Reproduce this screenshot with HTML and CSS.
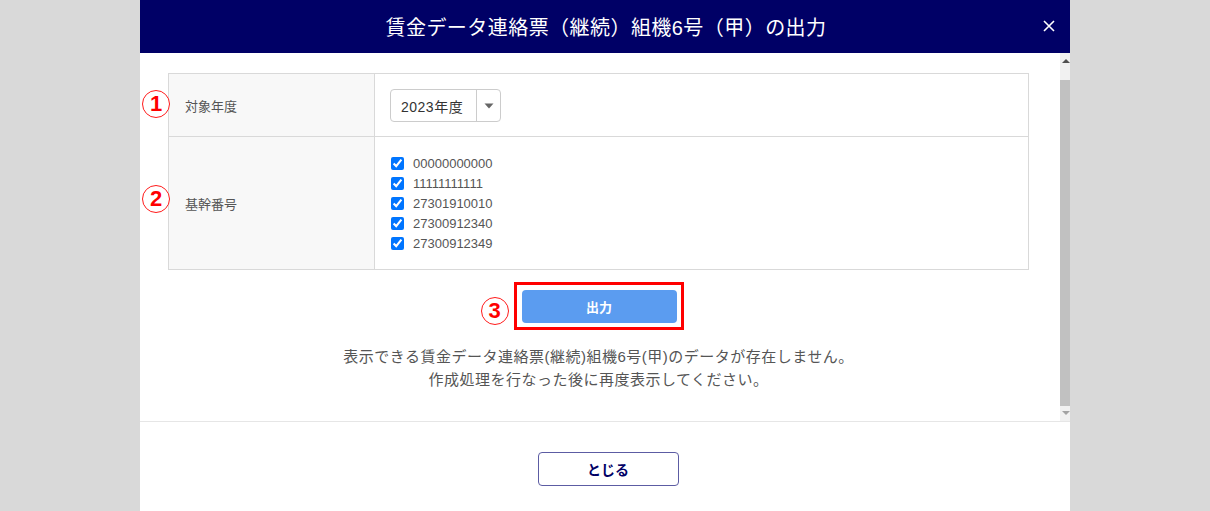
FILE: index.html
```html
<!DOCTYPE html>
<html lang="ja">
<head>
<meta charset="utf-8">
<title>賃金データ連絡票（継続）組機6号（甲）の出力</title>
<link rel="stylesheet" href="styles.css">
</head>
<body>
<div class="modal">
  <header class="modal-header">
    <h1 class="modal-title">賃金データ連絡票（継続）組機6号（甲）の出力</h1>
    <button class="close-btn" aria-label="閉じる">
      <svg width="12" height="12" viewBox="0 0 12 12"><path d="M1 1L11 11M11 1L1 11" stroke="#fff" stroke-width="1.6" fill="none"/></svg>
    </button>
  </header>
  <div class="modal-body-wrap">
    <div class="modal-body">
      <div class="form-table">
        <div class="cell label-cell row1">
          <span class="mark mark-left">1</span>
          対象年度
        </div>
        <div class="cell value-cell row1">
          <div class="select">
            <span class="select-text">2023年度</span>
            <span class="select-arrow"><svg width="10" height="6" viewBox="0 0 10 6"><path d="M0.5 0.5H9.5L5 5.5Z" fill="#666"/></svg></span>
          </div>
        </div>
        <div class="cell label-cell row2">
          <span class="mark mark-left">2</span>
          基幹番号
        </div>
        <div class="cell value-cell row2">
          <ul class="check-list">
            <li><label><input type="checkbox" checked><span>00000000000</span></label></li>
            <li><label><input type="checkbox" checked><span>11111111111</span></label></li>
            <li><label><input type="checkbox" checked><span>27301910010</span></label></li>
            <li><label><input type="checkbox" checked><span>27300912340</span></label></li>
            <li><label><input type="checkbox" checked><span>27300912349</span></label></li>
          </ul>
        </div>
      </div>
      <div class="action-row">
        <div class="highlight">
          <span class="mark mark-btn">3</span>
          <button class="btn-primary">出力</button>
        </div>
      </div>
      <p class="message">表示できる賃金データ連絡票(継続)組機6号(甲)のデータが存在しません。<br>作成処理を行なった後に再度表示してください。</p>
    </div>
    <div class="scrollbar">
      <span class="sb-up"></span>
      <span class="sb-thumb"></span>
      <span class="sb-down"></span>
    </div>
  </div>
  <footer class="modal-footer">
    <button class="btn-secondary">とじる</button>
  </footer>
</div>
</body>
</html>
```

FILE: styles.css
```css
* { box-sizing: border-box; }
html, body { margin: 0; padding: 0; }
body {
  background: #d9d9d9;
  font-family: "Liberation Sans", "Noto Sans CJK JP", sans-serif;
  color: #555;
  height: 511px;
  overflow: hidden;
}
.modal {
  width: 930px;
  height: 511px;
  margin-left: 140px;
  background: #fff;
  display: flex;
  flex-direction: column;
}
.modal-header {
  height: 53px;
  background: #000066;
  display: flex;
  align-items: center;
  justify-content: center;
  position: relative;
  flex: none;
}
.modal-title {
  margin: 0;
  color: #fff;
  font-size: 20px;
  font-weight: normal;
  letter-spacing: 0.45px;
  padding-left: 2px;
}
.close-btn {
  position: absolute;
  right: 14px;
  top: 19px;
  width: 14px;
  height: 14px;
  padding: 0;
  border: 0;
  background: transparent;
  display: flex;
  align-items: center;
  justify-content: center;
}
.modal-body-wrap {
  display: flex;
  height: 369px;
  flex: none;
  border-bottom: 1px solid #e6e6e6;
}
.modal-body {
  flex: 1;
  padding: 20px 31px 0 28px;
}
.scrollbar {
  width: 10px;
  background: #f1f1f1;
  display: flex;
  flex-direction: column;
  align-items: center;
  padding-top: 6px;
}
.sb-up {
  width: 0; height: 0;
  border-left: 4px solid transparent;
  border-right: 4px solid transparent;
  border-bottom: 4px solid #505050;
  margin-bottom: 17px;
  margin-left: 2px;
}
.sb-thumb {
  width: 10px;
  height: 326px;
  background: #c1c1c1;
}
.sb-down {
  width: 0; height: 0;
  border-left: 4px solid transparent;
  border-right: 4px solid transparent;
  border-top: 4px solid #a3a3a3;
  margin-top: 5px;
  margin-left: 2px;
}

.form-table {
  display: grid;
  grid-template-columns: 206px 1fr;
  border: 1px solid #d9d9d9;
}
.cell { display: flex; align-items: center; }
.label-cell {
  background: #f8f8f8;
  border-right: 1px solid #d9d9d9;
  padding-left: 16px;
  font-size: 13px;
  color: #555;
  position: relative;
}
.row1 { height: 63px; border-bottom: 1px solid #d9d9d9; }
.row2 { height: 132px; }
.value-cell { padding: 0 15px; }
.row1.value-cell { padding-top: 1px; }
.row2.value-cell { align-items: flex-start; padding-top: 16px; }

.mark {
  position: absolute;
  width: 28px;
  height: 28px;
  border: 1px solid #ff1a1a;
  border-radius: 50%;
  color: #ff0000;
  font-family: "Liberation Sans", sans-serif;
  font-weight: bold;
  font-size: 22px;
  line-height: 26px;
  text-align: center;
  background: #fff;
}
.mark-left { left: -27px; top: 50%; margin-top: -15px; }
.row2 .mark-left { margin-top: -18px; }

.select {
  width: 111px;
  height: 33px;
  border: 1px solid #ccc;
  border-radius: 4px;
  display: flex;
  align-items: stretch;
  background: #fff;
}
.select-text {
  flex: 1;
  font-size: 14px;
  letter-spacing: 0.5px;
  color: #333;
  display: flex;
  align-items: center;
  padding-left: 10px;
  border-right: 1px solid #ccc;
}
.select-arrow {
  width: 23px;
  display: flex;
  align-items: center;
  justify-content: center;
}

.check-list { list-style: none; margin: 0; padding: 0; }
.check-list li { height: 20px; display: flex; align-items: center; }
.check-list label { display: flex; align-items: center; font-size: 13px; color: #555; }
.check-list input {
  width: 13px;
  height: 13px;
  margin: 0 9px 0 1px;
  accent-color: #0075ff;
}

.action-row {
  display: flex;
  justify-content: center;
  margin-top: 12px;
}
.highlight {
  position: relative;
  border: 3px solid #ff0000;
  padding: 5px 4px 4px 5px;
}
.mark-btn { left: -36px; top: 12px; }
.btn-primary {
  display: block;
  width: 155px;
  height: 33px;
  border: 0;
  border-radius: 4px;
  background: #5b9cf0;
  color: #fff;
  font-family: "Noto Sans CJK JP", sans-serif;
  font-weight: bold;
  font-size: 13px;
}
.message {
  margin: 15px 0 0;
  text-align: center;
  font-size: 15px;
  letter-spacing: 0.5px;
  line-height: 23px;
  color: #555;
}
.modal-footer {
  flex: 1;
  display: flex;
  justify-content: center;
  align-items: flex-start;
  padding-top: 30px;
  padding-left: 6px;
}
.btn-secondary {
  width: 141px;
  height: 34px;
  border: 1px solid #5c5ca3;
  border-radius: 4px;
  background: #fff;
  color: #000066;
  font-family: "Noto Sans CJK JP", sans-serif;
  font-weight: bold;
  font-size: 14px;
}
```
